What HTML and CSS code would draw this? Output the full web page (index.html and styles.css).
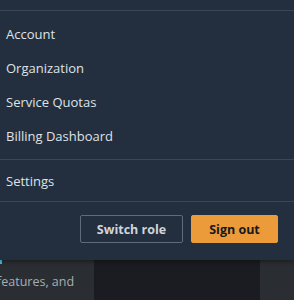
FILE: index.html
```html
<!DOCTYPE html>
<html>
<head>
  <title>Account menu</title>
  <link rel="stylesheet" href="styles.css">
</head>
<body>
  <div class="dropdown">
    <div class="dropdown-head"></div>

    <div class="section links">
      <a class="item" href="#">Account</a>
      <a class="item" href="#">Organization</a>
      <a class="item" href="#">Service Quotas</a>
      <a class="item" href="#">Billing Dashboard</a>
    </div>

    <div class="section settings">
      <a class="item" href="#">Settings</a>
    </div>

    <div class="section actions">
      <button class="btn btn-normal">Switch role</button>
      <button class="btn btn-primary">Sign out</button>
    </div>
  </div>

  <div class="page">
    <div class="intro">
      <span class="marker"></span>
      <p class="intro-text">features, and</p>
    </div>
    <div class="panel-dark"></div>
    <div class="rest"></div>
  </div>
</body>
</html>
```

FILE: styles.css
```css
body{
  margin: 0;
  background-color: #2a2d32;
  font-family: "Open Sans", "Noto Sans", Arial, sans-serif;
  overflow: hidden;
}

.dropdown{
  background-color: #232f3e;
  box-shadow: 0 2px 4px rgba(0, 0, 0, 0.35);
  position: relative;
  z-index: 1;
}
.dropdown-head{
  height: 10px;
}

.section{
  border-top: 1px solid #3b4554;
}
.links{
  padding: 6px 0 6px 0;
}
.settings{
  padding: 4px 0 3px 0;
}

.item{
  display: block;
  height: 34px;
  line-height: 34px;
  padding-left: 6px;
  color: #dfe3e6;
  font-size: 13px;
  text-decoration: none;
}

.actions{
  display: flex;
  justify-content: flex-end;
  gap: 8px;
  padding: 13px 16px 17px 0;
}
.btn{
  box-sizing: border-box;
  height: 28px;
  padding: 0;
  font-family: inherit;
  font-size: 12.5px;
  font-weight: 700;
  white-space: nowrap;
  border-radius: 2px;
  cursor: pointer;
}
.btn-normal{
  width: 103px;
  background-color: transparent;
  color: #d1d5db;
  border: 1px solid #5f6b7a;
}
.btn-primary{
  width: 87px;
  background-color: #ec9b3a;
  color: #16191f;
  border: 1px solid #ec9b3a;
}

.page{
  display: flex;
  height: 40px;
}
.intro{
  width: 94px;
  overflow: hidden;
}
.marker{
  display: block;
  width: 2px;
  height: 4px;
  background-color: #44b9d6;
}
.intro-text{
  margin: 9px 0 0 -3px;
  color: #a7adb4;
  font-size: 12.5px;
  white-space: nowrap;
}
.panel-dark{
  width: 166px;
  background-color: #1a1c21;
}
.rest{
  flex: 1;
}
```
